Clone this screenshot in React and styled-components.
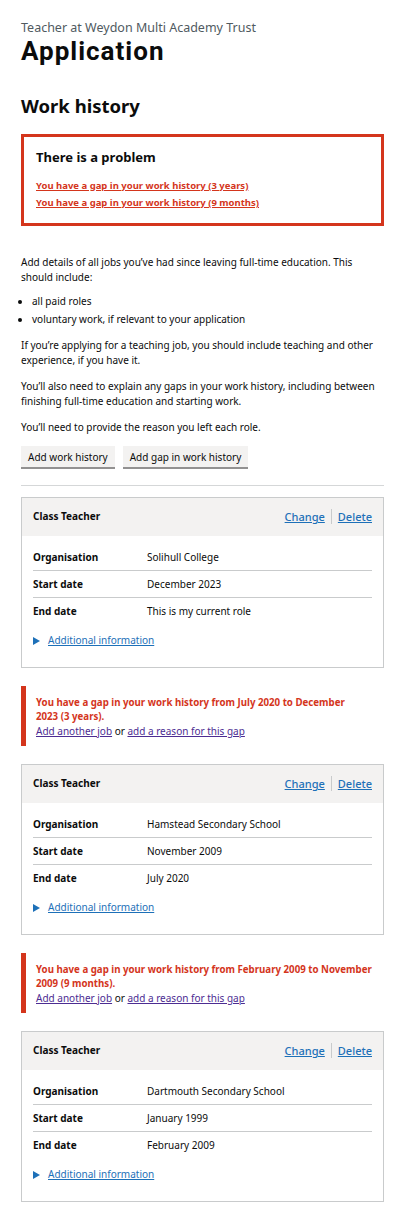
import React from "react";
import styled, { createGlobalStyle } from "styled-components";

const Global = createGlobalStyle`
  html, body { margin: 0; padding: 0; background: #ffffff; }
  body { font-family: "Noto Sans", "Liberation Sans", Arial, sans-serif; color: #0b0c0c; }
  *, *::before, *::after { box-sizing: border-box; }
`;

const Page = styled.main`
  padding: 20px 36px 19px 21px;
`;

const Caption = styled.span`
  display: block;
  font-size: 12.5px;
  line-height: 16px;
  color: #505a5f;
`;

const Title = styled.h1`
  margin: 0;
  font-family: Roboto, "Noto Sans", sans-serif;
  font-size: 26px;
  line-height: 30px;
  font-weight: 700;
  letter-spacing: 1px;
`;

const SectionTitle = styled.h2`
  margin: 28px 0 16px;
  font-size: 18.5px;
  line-height: 24px;
  font-weight: 700;
`;

const ErrorSummary = styled.div`
  border: 3px solid #d4351c;
  padding: 11px 12px 12px;
`;

const ErrorTitle = styled.h3`
  margin: 0 0 11px;
  font-size: 13px;
  line-height: 18px;
  font-weight: 700;
`;

const ErrorList = styled.ul`
  list-style: none;
  margin: 0;
  padding: 0;
`;

const ErrorItem = styled.li`
  font-size: 9.5px;
  line-height: 17px;
  font-weight: 700;
`;

const ErrorLink = styled.a`
  color: #d4351c;
  text-decoration: underline;
  text-underline-offset: 1px;
`;

const Intro = styled.div`
  margin-top: 29px;
`;

const Para = styled.p`
  margin: 0 0 11px;
  font-size: 10px;
  line-height: 15px;
  max-width: 356px;
`;

const Bullets = styled.ul`
  margin: -2px 0 11px;
  padding-left: 11px;
`;

const Bullet = styled.li`
  font-size: 10px;
  line-height: 15px;
  margin-bottom: 3px;
`;

const ButtonRow = styled.div`
  display: flex;
  gap: 8px;
  margin-top: 11px;
`;

const Button = styled.button`
  font-family: inherit;
  font-size: 10px;
  line-height: 14px;
  color: #0b0c0c;
  background: #f3f2f1;
  border: 0;
  border-radius: 0;
  padding: 4px 7px 3px;
  box-shadow: 0 2px 0 #929191;
  cursor: pointer;
`;

const Rule = styled.hr`
  margin: 18px 0 11px;
  border: 0;
  border-top: 1px solid #d5d7d8;
`;

const Card = styled.section`
  border: 1px solid #c9cbcc;
`;

const CardHeader = styled.div`
  display: flex;
  justify-content: space-between;
  align-items: center;
  background: #f3f2f1;
  padding: 11px 11px 12px 11px;
`;

const CardTitle = styled.h3`
  margin: 0;
  font-size: 10px;
  line-height: 15px;
  font-weight: 700;
`;

const Actions = styled.ul`
  display: flex;
  list-style: none;
  margin: 0;
  padding: 0;
`;

const Action = styled.li`
  font-size: 11px;
  line-height: 15px;
  font-weight: 500;
  padding: 0 6px;
  & + & { border-left: 1px solid #c9cbcc; }
  &:last-child { padding-right: 0; }
`;

const BlueLink = styled.a`
  color: #1d70b8;
  text-decoration: underline;
  text-underline-offset: 1px;
`;

const CardBody = styled.div`
  padding: 8px 11px 19px 11px;
`;

const Rows = styled.dl`
  margin: 0;
`;

const Row = styled.div`
  display: grid;
  grid-template-columns: 114px 1fr;
  padding: 6px 0 5px;
  font-size: 10px;
  line-height: 15px;
  border-bottom: ${(p) => (p.$last ? "0" : "1px solid #c9cbcc")};
`;

const Key = styled.dt`
  font-weight: 700;
`;

const Value = styled.dd`
  margin: 0;
`;

const Details = styled.div`
  display: flex;
  align-items: center;
  gap: 8px;
  margin-top: 9px;
  font-size: 10px;
  line-height: 15px;
`;

const Arrow = styled.span`
  width: 0;
  height: 0;
  border-style: solid;
  border-width: 4px 0 4px 7px;
  border-color: transparent transparent transparent #1d70b8;
`;

const GapAlert = styled.div`
  margin: 18px 0;
  border-left: 5px solid #d4351c;
  padding: 10px 0 8px 10px;
  font-size: 10px;
  line-height: 14px;
`;

const GapText = styled.p`
  margin: 0;
  color: #d4351c;
  font-weight: 700;
  font-size: 9.7px;
`;

const GapActions = styled.p`
  margin: 0;
`;

const VisitedLink = styled.a`
  color: #4c2c92;
  text-decoration: underline;
  text-underline-offset: 1px;
`;

const jobs = [
  { org: "Solihull College", start: "December 2023", end: "This is my current role" },
  { org: "Hamstead Secondary School", start: "November 2009", end: "July 2020" },
  { org: "Dartmouth Secondary School", start: "January 1999", end: "February 2009" },
];

const gaps = [
  ["You have a gap in your work history from July 2020 to December", "2023 (3 years)."],
  ["You have a gap in your work history from February 2009 to November", "2009 (9 months)."],
];

function JobCard({ job }) {
  return (
    <Card>
      <CardHeader>
        <CardTitle>Class Teacher</CardTitle>
        <Actions>
          <Action><BlueLink href="#">Change</BlueLink></Action>
          <Action><BlueLink href="#">Delete</BlueLink></Action>
        </Actions>
      </CardHeader>
      <CardBody>
        <Rows>
          <Row><Key>Organisation</Key><Value>{job.org}</Value></Row>
          <Row><Key>Start date</Key><Value>{job.start}</Value></Row>
          <Row $last><Key>End date</Key><Value>{job.end}</Value></Row>
        </Rows>
        <Details>
          <Arrow />
          <BlueLink href="#">Additional information</BlueLink>
        </Details>
      </CardBody>
    </Card>
  );
}

function Gap({ lines }) {
  return (
    <GapAlert>
      <GapText>{lines[0]}<br />{lines[1]}</GapText>
      <GapActions>
        <VisitedLink href="#">Add another job</VisitedLink> or{" "}
        <VisitedLink href="#">add a reason for this gap</VisitedLink>
      </GapActions>
    </GapAlert>
  );
}

export default function App() {
  return (
    <>
      <Global />
      <Page>
        <Caption>Teacher at Weydon Multi Academy Trust</Caption>
        <Title>Application</Title>
        <SectionTitle>Work history</SectionTitle>
        <ErrorSummary>
          <ErrorTitle>There is a problem</ErrorTitle>
          <ErrorList>
            <ErrorItem><ErrorLink href="#">You have a gap in your work history (3 years)</ErrorLink></ErrorItem>
            <ErrorItem><ErrorLink href="#">You have a gap in your work history (9 months)</ErrorLink></ErrorItem>
          </ErrorList>
        </ErrorSummary>
        <Intro>
          <Para>Add details of all jobs you’ve had since leaving full-time education. This should include:</Para>
          <Bullets>
            <Bullet>all paid roles</Bullet>
            <Bullet>voluntary work, if relevant to your application</Bullet>
          </Bullets>
          <Para>If you’re applying for a teaching job, you should include teaching and other experience, if you have it.</Para>
          <Para>You’ll also need to explain any gaps in your work history, including between finishing full-time education and starting work.</Para>
          <Para>You’ll need to provide the reason you left each role.</Para>
          <ButtonRow>
            <Button>Add work history</Button>
            <Button>Add gap in work history</Button>
          </ButtonRow>
        </Intro>
        <Rule />
        <JobCard job={jobs[0]} />
        <Gap lines={gaps[0]} />
        <JobCard job={jobs[1]} />
        <Gap lines={gaps[1]} />
        <JobCard job={jobs[2]} />
      </Page>
    </>
  );
}
